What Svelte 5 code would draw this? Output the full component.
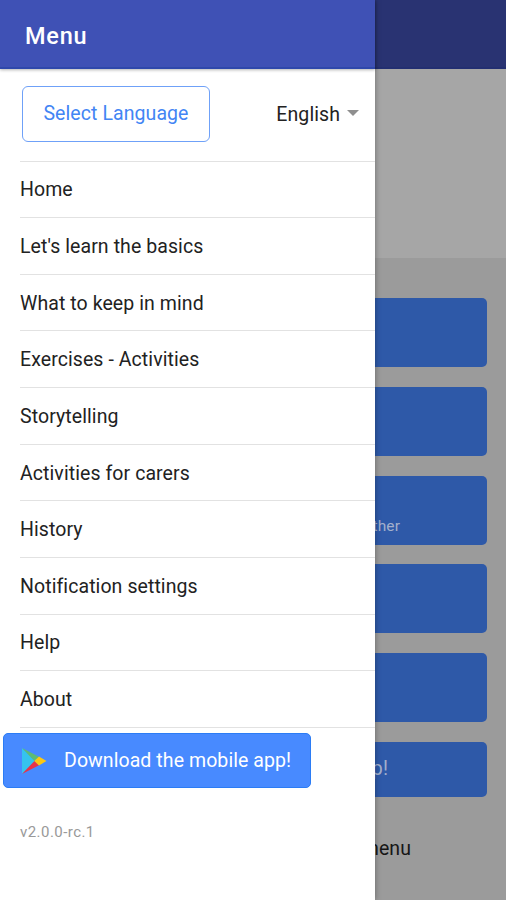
<script lang="ts">
    const items: string[] = [
        "Home",
        "Let's learn the basics",
        "What to keep in mind",
        "Exercises - Activities",
        "Storytelling",
        "Activities for carers",
        "History",
        "Notification settings",
        "Help",
        "About",
    ];
    const cards: string[] = ["", "", "ther", "", ""];
</script>

<div class="app">
    <aside class="drawer">
        <header class="toolbar">Menu</header>
        <div class="language">
            <button class="outline">Select Language</button>
            <div class="select">
                <span>English</span>
                <span class="caret"></span>
            </div>
        </div>
        <nav>
            {#each items as item}
                <div class="item">{item}</div>
            {/each}
        </nav>
        <button class="download">
            <svg width="26" height="28" viewBox="0 0 26 28">
                <path d="M1 1 L1 27 L14 14 Z" fill="#35c3ee" />
                <path d="M1 1 L18 9.8 L13.5 14 Z" fill="#5dbb75" />
                <path d="M1 27 L13.5 14 L18 18.2 Z" fill="#e8334a" />
                <path d="M18 9.6 L25.5 14 L18 18.4 L13.3 14 Z" fill="#fdc813" />
            </svg>
            <span>Download the mobile app!</span>
        </button>
        <p class="version">v2.0.0-rc.1</p>
    </aside>

    <main class="page">
        <div class="toolbar dark"></div>
        <div class="banner"></div>
        <div class="cards">
            {#each cards as card}
                <div class="card"><span>{card}</span></div>
            {/each}
            <div class="card short"><span>p!</span></div>
        </div>
        <p class="hint">menu</p>
    </main>
</div>

<style>
    :global(body) {
        background: #fff;
    }

    .app {
        display: flex;
        width: 506px;
        height: 900px;
        overflow: hidden;
        font-family: Roboto, sans-serif;
        font-size: 19.5px;
        letter-spacing: 0.08px;
        color: #222;
    }

    .drawer {
        position: relative;
        z-index: 1;
        width: 375px;
        flex: none;
        background: #fff;
        box-shadow: 0 0 6px rgba(0, 0, 0, 0.35);
    }

    .toolbar {
        box-sizing: border-box;
        height: 69px;
        padding: 4px 25px 0;
        display: flex;
        align-items: center;
        font-size: 23.5px;
        font-weight: 500;
        letter-spacing: 0.75px;
        color: #fff;
        background: #3f51b5;
        border-bottom: 2px solid #2f48ab;
        box-shadow: 0 1px 3px rgba(0, 0, 0, 0.3);
    }

    .toolbar.dark {
        background: #293372;
        border-bottom-color: #232f71;
    }

    .language {
        box-sizing: border-box;
        height: 91.5px;
        padding: 17px 16px 18px 22px;
        display: flex;
        align-items: center;
        justify-content: space-between;
    }

    button {
        box-sizing: border-box;
        font: inherit;
        letter-spacing: inherit;
    }

    .outline {
        width: 188px;
        height: 56px;
        padding: 0 0 1px;
        color: #4285f4;
        background: #fff;
        border: 1.5px solid #6fa1f8;
        border-radius: 6px;
    }

    .select {
        display: flex;
        align-items: center;
        gap: 7px;
    }

    .caret {
        border: 6px solid transparent;
        border-top-color: #8f8f8f;
        border-bottom: 0;
        margin-bottom: 2px;
    }

    nav {
        margin-left: 20px;
        border-top: 1px solid #e2e2e2;
    }

    .item {
        box-sizing: border-box;
        height: 56.65px;
        padding-top: 1px;
        display: flex;
        align-items: center;
        border-bottom: 1px solid #e2e2e2;
    }

    .download {
        display: flex;
        align-items: center;
        width: 308px;
        height: 55px;
        margin: 5.5px 0 0 3px;
        padding: 0 0 0 17px;
        gap: 17px;
        color: #fff;
        background: #488aff;
        border: 1px solid #2b7cf5;
        border-radius: 5px;
    }

    .download span {
        margin-bottom: 1px;
    }

    .version {
        margin: 35px 0 0 20px;
        font-size: 15px;
        line-height: 18px;
        letter-spacing: 0.45px;
        color: #999;
    }

    .page {
        flex: 1;
        min-width: 0;
        background: #9b9b9b;
    }

    .banner {
        height: 189px;
        background: #a6a6a6;
    }

    .cards {
        display: flex;
        flex-direction: column;
        gap: 19.7px;
        padding: 40.4px 19px 0 0;
    }

    .card {
        box-sizing: border-box;
        height: 69px;
        padding: 0 87px 10px 0;
        display: flex;
        align-items: flex-end;
        justify-content: flex-end;
        font-size: 15.5px;
        color: #a3b0cc;
        background: #2e59a8;
        border-radius: 0 5px 5px 0;
    }

    .card.short {
        height: 55.5px;
        padding: 0 99px 3px 0;
        align-items: center;
        font-size: 19.5px;
    }

    .hint {
        margin: 40px 95px 0 0;
        display: flex;
        justify-content: flex-end;
        line-height: 23px;
        color: #161616;
    }
</style>
